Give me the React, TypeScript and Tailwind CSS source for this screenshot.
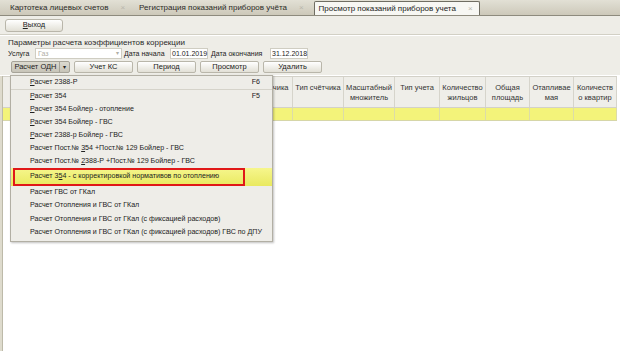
import clsx from "clsx";

const Btn = ({ children, className }: { children: React.ReactNode; className?: string }) => (
  <button
    className={clsx(
      "flex h-[12px] items-center justify-center rounded-[2px] border border-[#b9b6aa] bg-linear-to-b from-white to-[#e2e0d6] text-[7.5px] leading-none text-[#222]",
      className
    )}
  >
    {children}
  </button>
);

const Tab = ({ label, active }: { label: string; active?: boolean }) => (
  <div
    className={clsx(
      "flex h-[14px] items-center gap-[12px] pr-[6px] pl-[4px] text-[8px] leading-none",
      active
        ? "rounded-t-[2px] border border-b-0 border-[#6f6d62] bg-[#f7f7f3] text-[#222]"
        : "text-[#2c2b27]"
    )}
  >
    <span>{label}</span>
    <span className="text-[8px] text-[#b8b6ac]">×</span>
  </div>
);

type Item = { label: React.ReactNode; key?: string };

const u = (s: string) => <span className="underline underline-offset-1">{s}</span>;

const before: Item[] = [
  { label: <>{u("Р")}асчет 2388-Р</>, key: "F6" },
  { label: <>{u("Р")}асчет 354</>, key: "F5" },
  { label: <>{u("Р")}асчет 354 Бойлер - отопление</> },
  { label: <>{u("Р")}асчет 354 Бойлер - ГВС</> },
  { label: <>{u("Р")}асчет 2388-р Бойлер - ГВС</> },
  { label: <>Расчет Пост.№ {u("3")}54 +Пост.№ 129 Бойлер - ГВС</> },
  { label: <>Расчет Пост.№ {u("2")}388-Р +Пост.№ 129 Бойлер - ГВС</> },
];

const after: string[] = [
  "Расчет ГВС от ГКал",
  "Расчет Отопления и ГВС от ГКал",
  "Расчет Отопления и ГВС от ГКал (с фиксацией расходов)",
  "Расчет Отопления и ГВС от ГКал (с фиксацией расходов) ГВС по ДПУ",
];

const cols: { w: string; title: React.ReactNode }[] = [
  { w: "w-[226px]", title: "" },
  { w: "w-[64px]", title: "Номер счётчика" },
  { w: "w-[51px]", title: "Тип счётчика" },
  { w: "w-[51px]", title: <>Масштабный<br />множитель</> },
  { w: "w-[45px]", title: "Тип учета" },
  { w: "w-[46px]", title: <>Количество<br />жильцов</> },
  { w: "w-[44px]", title: <>Общая<br />площадь</> },
  { w: "w-[44px]", title: <>Отапливае<br />мая</> },
  { w: "w-[43px]", title: <>Количеств<br />о квартир</> },
];

export default function App() {
  return (
    <div className="relative flex h-[351px] w-[620px] flex-col overflow-hidden bg-white font-['Liberation_Sans',Arial,sans-serif] text-[#222]">
      {/* tabs */}
      <div className="flex h-[16px] shrink-0 items-end gap-[4px] border-b border-[#8e8b7e] bg-linear-to-b from-[#e2e0d5] to-[#cdc9ba] pl-[6px]">
        <Tab label="Картотека лицевых счетов" />
        <Tab label="Регистрация показаний  приборов учёта" />
        <Tab label="Просмотр показаний приборов учета" active />
      </div>

      {/* toolbar + params */}
      <div className="shrink-0 bg-[#eeede7]">
        <div className="flex h-[19px] items-center border-b border-[#d2d0c5] pl-[5px]">
          <Btn className="h-[13px] w-[58px] rounded-[3px]">
            <span className="underline underline-offset-1">В</span>ыход
          </Btn>
        </div>
        <div className="border-t border-white px-[8px] pt-[2px]">
          <div className="text-[8px] leading-[9px] text-[#2a2a2a]">Параметры расчета коэффициентов коррекции</div>
          <div className="flex h-[12px] items-center text-[7px] leading-none">
            <span className="w-[27px]">Услуга</span>
            <div className="flex h-[11px] w-[87px] items-center justify-between border border-[#cfcdc2] bg-white px-[2px] text-[#b0aea6]">
              <span>Газ</span>
              <span className="text-[6px]">▾</span>
            </div>
            <span className="ml-[2px] w-[46px]">Дата начала</span>
            <div className="flex h-[11px] w-[38px] items-center border border-[#cfcdc2] bg-white pl-[1px] text-[7px]">01.01.2019</div>
            <span className="ml-[3px] w-[59px]">Дата окончания</span>
            <div className="flex h-[11px] w-[38px] items-center border border-[#cfcdc2] bg-white pl-[1px] text-[7px]">31.12.2018</div>
          </div>
          <div className="mt-[2px] flex h-[14px] items-start gap-[4px] pl-[3px]">
            <div className="flex h-[12px] w-[59px] items-stretch rounded-[2px] border border-[#a6a398] bg-linear-to-b from-[#dcdad0] to-[#c7c4b8] text-[7.5px] leading-none">
              <span className="flex flex-1 items-center justify-center border-r border-[#a6a398]">Расчет ОДН</span>
              <span className="flex w-[9px] items-center justify-center text-[6px]">▾</span>
            </div>
            <Btn className="w-[59px]">Учет КС</Btn>
            <Btn className="w-[59px]">Период</Btn>
            <Btn className="w-[59px]">Просмотр</Btn>
            <Btn className="w-[59px]">Удалить</Btn>
          </div>
        </div>
      </div>

      {/* grid */}
      <div className="flex flex-1 pt-[1px]">
        <div className="w-[3px] shrink-0 border-r border-[#bdbaa9] bg-[#dedbcd]" />
        <div className="flex flex-col">
          <div className="flex h-[32px] border-y border-[#d3d1c8] bg-[#efeee9]">
            {cols.map((c, i) => (
              <div
                key={i}
                className={clsx(
                  c.w,
                  "flex shrink-0 items-start justify-center border-r border-[#d6d4cb] pt-[6px] text-center text-[7.5px] leading-[10px] text-[#333]"
                )}
              >
                <span>{c.title}</span>
              </div>
            ))}
          </div>
          <div className="flex h-[13px] border-b border-[#d6d6a8] bg-[#f3f37a]">
            {cols.map((c, i) => (
              <div key={i} className={clsx(c.w, "shrink-0 border-r border-[#dcdca8]")} />
            ))}
          </div>
        </div>
      </div>

      {/* dropdown menu */}
      <div className="absolute top-[75px] left-[10px] w-[263px] border border-[#b2afa4] bg-[#eeede8] pt-[1px] pb-[2px] text-[7.1px] leading-none text-[#222] shadow-[1px_1px_2px_rgba(0,0,0,0.25)]">
        {before.map((it, i) => (
          <div
            key={i}
            className={clsx(
              "flex h-[13px] items-center justify-between pr-[12px] pl-[19px]",
              i === 0 && "border-b border-[#d5d3ca]"
            )}
          >
            <span>{it.label}</span>
            {it.key && <span>{it.key}</span>}
          </div>
        ))}
        <div className="flex h-[18px] items-center bg-linear-to-b from-[#f6f68c] to-[#e9e95e]">
          <div className="ml-[2px] flex h-[18px] w-[232px] items-center border-2 border-[#e01818] pl-[15px]">
            Расчет 3{u("5")}4 - с корректировкой нормативов по отоплению
          </div>
        </div>
        {after.map((s) => (
          <div key={s} className="flex h-[13.3px] items-center pl-[19px]">
            {s}
          </div>
        ))}
      </div>
    </div>
  );
}
